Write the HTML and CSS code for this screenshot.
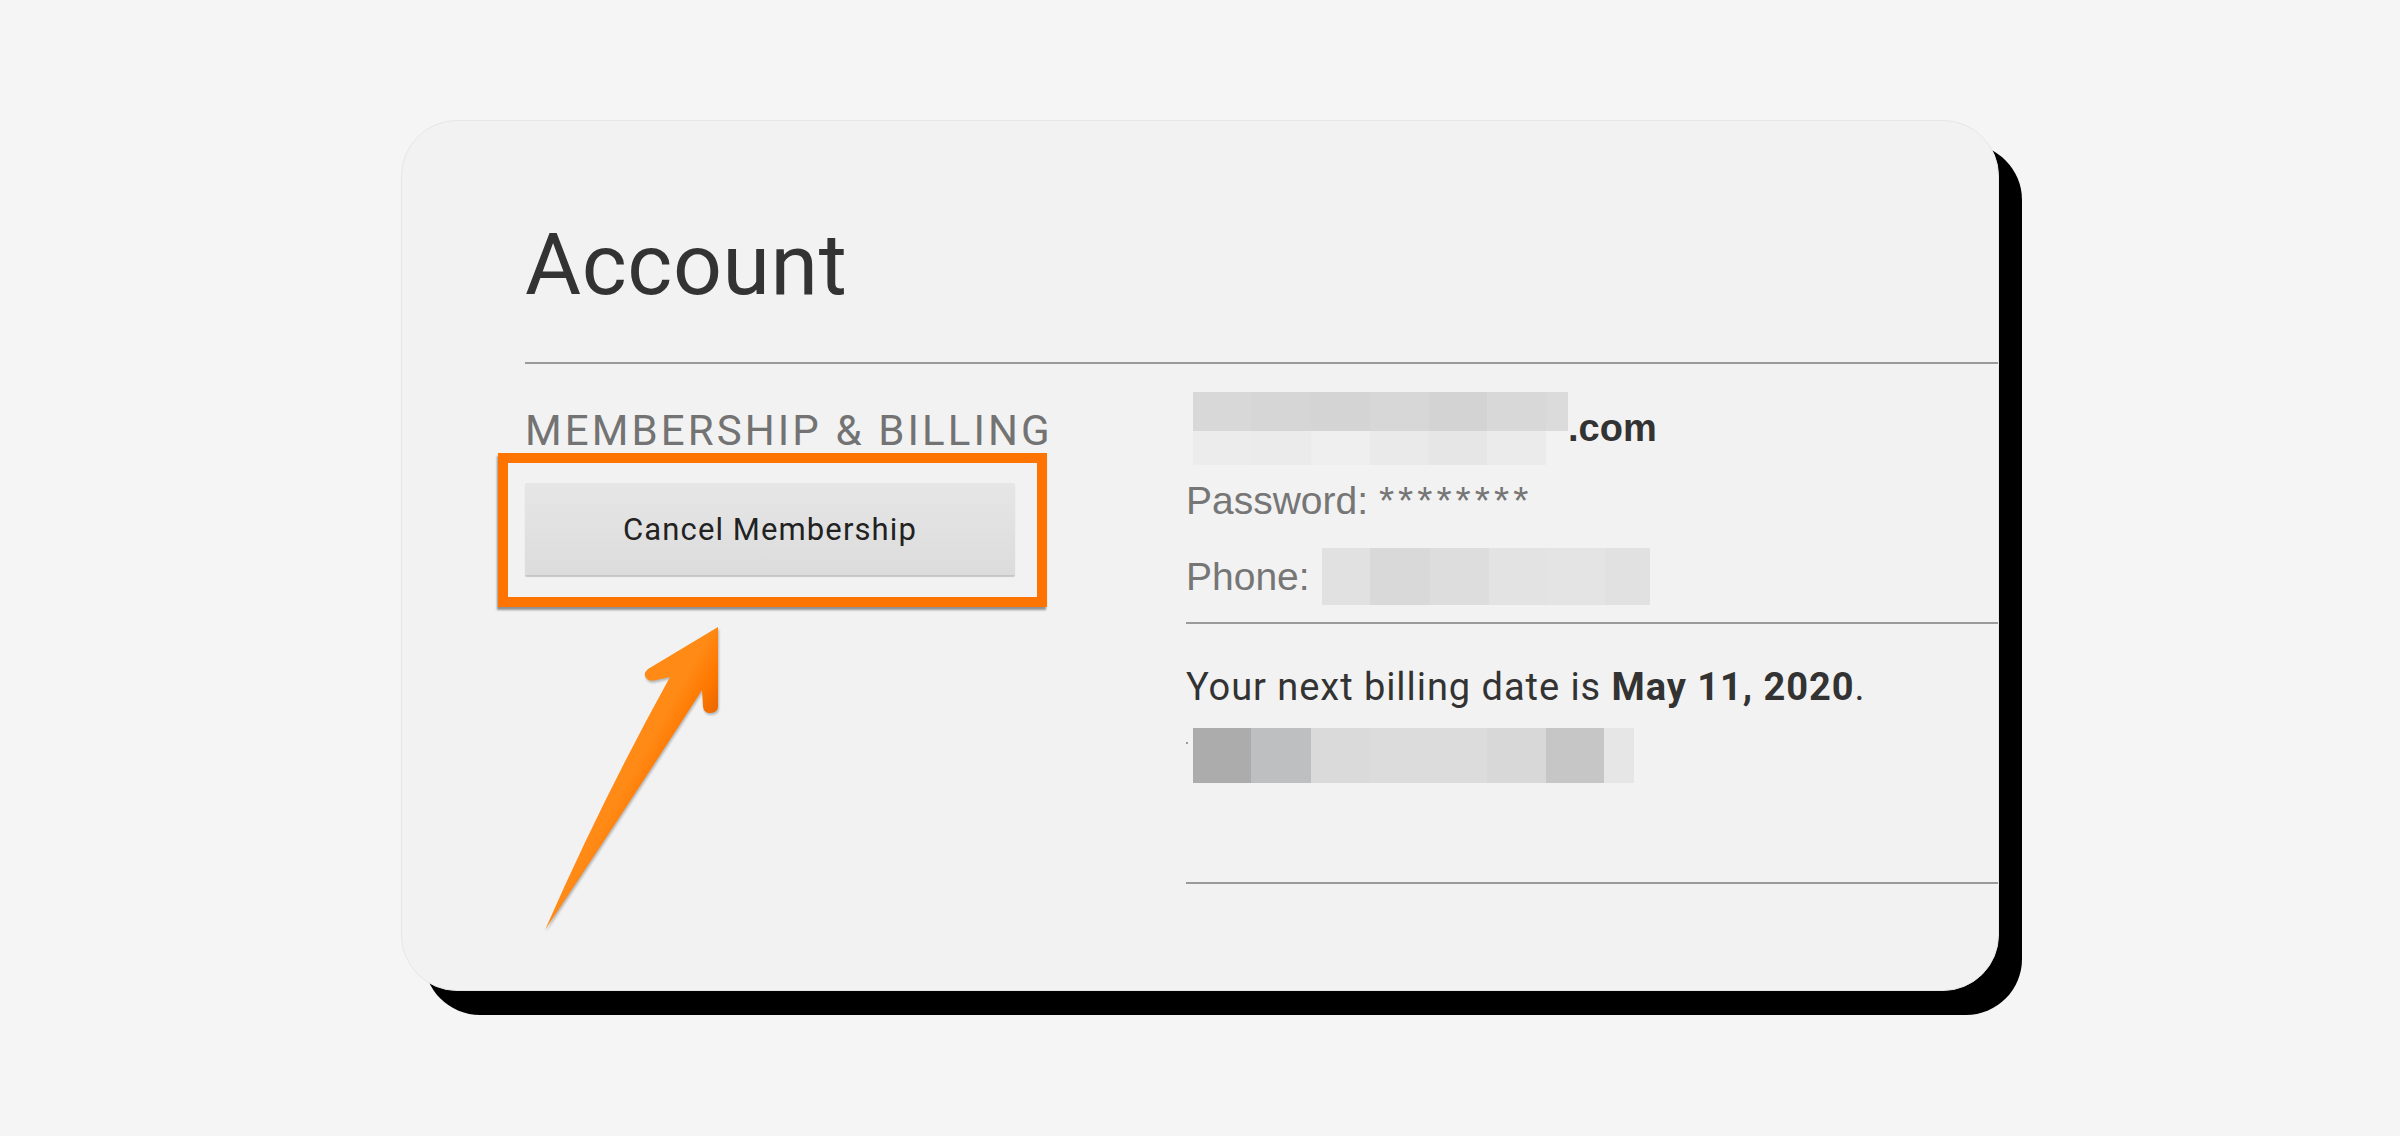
FILE: index.html
```html
<!DOCTYPE html>
<html lang="en">
<head>
<meta charset="utf-8">
<title>Account</title>
<link rel="stylesheet" href="styles.css">
</head>
<body>
<div class="page">
  <div class="card">
    <h1 class="title">Account</h1>
    <div class="rule"></div>
    <div class="section">
      <div class="section-side">
        <h2 class="section-label">MEMBERSHIP &amp; BILLING</h2>
        <button class="btn" type="button">Cancel Membership</button>
      </div>
      <div class="section-body">
        <div class="group account-group">
          <div class="email-row">
            <span class="blur blur-email"></span>
            <span class="email-tld">.com</span>
          </div>
          <div class="field field-password">Password: <span class="stars">********</span></div>
          <div class="phone-row">
            <span class="field field-phone">Phone:</span>
            <span class="blur blur-phone"></span>
          </div>
        </div>
        <div class="group billing">
          <div class="billing-text">Your next billing date is <strong>May 11, 2020</strong>.</div>
          <div class="billing-row">
            <span class="dot"></span>
            <span class="blur blur-plan"></span>
          </div>
        </div>
      </div>
    </div>
    <div class="highlight"></div>
    <svg class="arrow" width="220" height="330" viewBox="0 0 220 330" aria-hidden="true">
      <defs>
        <linearGradient id="arrowFill" gradientUnits="userSpaceOnUse" x1="110" y1="150" x2="150" y2="172">
          <stop offset="0" stop-color="#ff8a16"/>
          <stop offset="0.5" stop-color="#ff7800"/>
          <stop offset="1" stop-color="#e86600"/>
        </linearGradient>
      </defs>
      <path fill="url(#arrowFill)" d="M188,17 L118,59 Q112,64 117,69 Q120,72 126,70 L140,67 Q72,190 15,320 Q100,192 172,80 L173,97 Q174,103 180,103 Q188,103 188,96 Z"/>
    </svg>
  </div>
</div>
</body>
</html>
```

FILE: styles.css
```css
html, body {
  margin: 0;
  padding: 0;
  background: #f5f5f5;
}

.page {
  min-height: 100vh;
  box-sizing: border-box;
  display: flex;
  justify-content: center;
  align-items: flex-start;
  padding-top: 120px;
}

.card {
  position: relative;
  box-sizing: border-box;
  width: 1598px;
  padding: 94px 0 106px 123px;
  border: 1px solid #e6e6e6;
  border-radius: 56px;
  background: #f2f2f2;
  box-shadow: 23px 24px 0 #000;
}

.title {
  margin: 0;
  font: 400 86px/100px Roboto, "Liberation Sans", sans-serif;
  letter-spacing: 0.6px;
  color: #333;
}

.rule {
  height: 2px;
  margin-top: 47px;
  background: #9a9a9a;
}

.section {
  display: flex;
}

.section-side {
  flex: none;
  width: 661px;
  box-sizing: border-box;
  padding-top: 42px;
}

.section-label {
  margin: 0;
  font: 400 42px/50px Roboto, "Liberation Sans", sans-serif;
  color: #737373;
  letter-spacing: 3.1px;
  white-space: nowrap;
}

.btn {
  display: block;
  margin-top: 27px;
  width: 490px;
  height: 92px;
  padding: 0;
  border: 0;
  border-radius: 2px;
  background: linear-gradient(#e6e6e6, #dcdcdc);
  box-shadow: 0 2px 1px rgba(0, 0, 0, 0.18);
  font: 400 31px Roboto, "Liberation Sans", sans-serif;
  letter-spacing: 1.1px;
  color: #222;
}

.section-body {
  flex: 1;
  min-width: 0;
}

.group {
  border-bottom: 2px solid #9a9a9a;
}

.account-group {
  padding: 28px 0 17px;
}

.email-row {
  display: flex;
  align-items: flex-start;
  height: 73px;
}

.blur {
  display: block;
  flex: none;
}

.blur-email {
  margin-left: 7px;
  width: 375px;
  height: 73px;
  background:
    linear-gradient(to right, #d8d8d8 0 58px, #d6d6d6 58px 118px, #d4d4d4 118px 177px, #d7d7d7 177px 236px, #d3d3d3 236px 294px, #d8d8d8 294px 353px, #dbdbdb 353px 375px) left top / 375px 39px no-repeat,
    linear-gradient(to right, #ececec 0 58px, #ebebeb 58px 118px, #efefef 118px 177px, #eaeaea 177px 236px, #e6e6e6 236px 294px, #ebebeb 294px 353px) left 39px / 353px 34px no-repeat;
}

.email-tld {
  margin-top: 12px;
  font: 700 38px/48px "Liberation Sans", Arial, sans-serif;
  color: #333;
}

.field {
  font: 400 39px/48px "Liberation Sans", Arial, sans-serif;
  color: #767676;
}

.field-password {
  margin-top: 12px;
}

.stars {
  letter-spacing: 4px;
}

.phone-row {
  display: flex;
  align-items: flex-start;
  margin-top: 23px;
  height: 57px;
}

.field-phone {
  margin-top: 5px;
}

.blur-phone {
  margin-left: 12px;
  width: 328px;
  height: 57px;
  background: linear-gradient(to right, #e1e1e1 0 48px, #d9d9d9 48px 108px, #dddddd 108px 167px, #e3e3e3 167px 225px, #e4e4e4 225px 283px, #e1e1e1 283px 328px);
}

.billing {
  padding: 39px 0 99px;
}

.billing-text {
  font: 400 38px/48px Roboto, "Liberation Sans", sans-serif;
  letter-spacing: 0.95px;
  color: #333;
}

.billing-text strong {
  font-weight: 700;
}

.billing-row {
  display: flex;
  align-items: flex-start;
  margin-top: 17px;
  height: 55px;
}

.dot {
  display: block;
  width: 2px;
  height: 2px;
  margin-top: 14px;
  margin-right: 5px;
  background: #9a9a9a;
}

.blur-plan {
  width: 441px;
  height: 55px;
  background: linear-gradient(to right, #acacac 0 58px, #bebfc0 58px 118px, #dadada 118px 176px, #dcdcdc 176px 234px, #dcdcdc 234px 294px, #d8d8d8 294px 353px, #c6c6c6 353px 411px, #e6e6e6 411px 441px);
}

.highlight {
  position: absolute;
  left: 96px;
  top: 332px;
  width: 549px;
  height: 154px;
  box-sizing: border-box;
  border: 10px solid #ff7400;
  box-shadow: -1px 3px 2px rgba(0, 0, 0, 0.4);
  pointer-events: none;
}

.arrow {
  position: absolute;
  left: 128px;
  top: 489px;
  overflow: visible;
  filter: drop-shadow(1px 2px 1px rgba(0, 0, 0, 0.25));
}
```
